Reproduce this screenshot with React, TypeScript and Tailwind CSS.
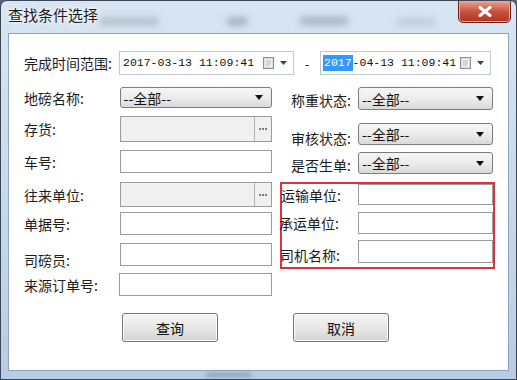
import React from 'react';

const FONT = { fontFamily: '"Noto Sans CJK SC", "Liberation Sans", sans-serif' };

const labelCls = 'text-[14px] leading-[16px] text-[#1b1b1b] whitespace-nowrap';

function ComboBox() {
  return (
    <div className="flex items-center justify-between h-full w-full rounded-[3px] border border-[#7c7c7c] bg-linear-to-b from-[#f6f6f6] via-[#ececec] to-[#d9d9d9] pl-[3px] pr-[8px]">
      <span className="text-[14px] leading-none text-[#111]">--全部--</span>
      <svg width="8" height="5" viewBox="0 0 8 5">
        <path d="M0 0h8L4 5z" fill="#111" />
      </svg>
    </div>
  );
}

function TextBox() {
  return <div className="h-full w-full border border-[#9c9c9c] bg-white" />;
}

function PickBox() {
  return (
    <div className="flex h-full w-full border border-[#9c9c9c] bg-[#f0f0f0]">
      <div className="flex-1" />
      <div className="w-[17px] border-l border-[#b4b4b4] flex items-center justify-center gap-[1px]">
        <div className="w-[2px] h-[2px] bg-[#7d7d7d]" />
        <div className="w-[2px] h-[2px] bg-[#7d7d7d]" />
        <div className="w-[2px] h-[2px] bg-[#7d7d7d]" />
      </div>
    </div>
  );
}

function DateBox({ width, highlight }: { width: string; highlight?: boolean }) {
  return (
    <div className={`flex items-center h-[24px] ${width} border border-[#c3c9d0] bg-white pl-[2px] pr-[6px]`}>
      <span className="text-[11.5px] leading-none text-[#111] flex" style={{ fontFamily: '"Liberation Mono", monospace' }}>
        {highlight ? (
          <>
            <span className="bg-[#3399ff] text-white px-[1px] py-[2px]">2017</span>
            <span className="py-[2px]">-04-13 11:09:41</span>
          </>
        ) : (
          <span className="py-[2px] pl-[1px]">2017-03-13 11:09:41</span>
        )}
      </span>
      <div className="flex-1" />
      <svg width="12" height="12" viewBox="0 0 12 12">
        <rect x="0.5" y="0.5" width="10" height="11" fill="#d9dde2" stroke="#8a9099" />
        <rect x="2" y="2" width="7" height="8" fill="#eef0f2" />
        <path d="M3 4h5M3 6h5M3 8h4" stroke="#b5bac0" strokeWidth="1" />
      </svg>
      <svg width="7" height="4" viewBox="0 0 7 4" className="ml-[5px]">
        <path d="M0 0h7L3.5 4z" fill="#3b4654" />
      </svg>
    </div>
  );
}

function Button({ text }: { text: string }) {
  return (
    <div className="w-[96px] h-[29px] rounded-[3px] border border-[#747474] bg-linear-to-b from-[#f6f6f6] via-[#e8e8e8] to-[#d3d3d3] flex items-center justify-center text-[14px] leading-none text-[#111] shadow-[inset_0_0_0_1px_#fcfcfc]">
      {text}
    </div>
  );
}

export default function App() {
  return (
    <div className="w-[517px] h-[380px] bg-[#5a6470]" style={FONT}>
      <div className="relative w-[517px] h-[380px] rounded-t-[7px] border border-[#3b4756] bg-linear-to-b from-[#d9e5f2] via-[#c8daed] to-[#b7cde5] overflow-hidden">
        {/* blurred glass smudges */}
        <div className="absolute left-[98px] top-[16px] w-[60px] h-[9px] rounded-full bg-[#9aa3ad] opacity-50 blur-[3px]" />
        <div className="absolute left-[225px] top-[16px] w-[22px] h-[9px] rounded-full bg-[#7f8892] opacity-50 blur-[3px]" />
        <div className="absolute left-[298px] top-[15px] w-[50px] h-[10px] rounded-full bg-[#8c959f] opacity-50 blur-[3px]" />
        <div className="absolute left-[395px] top-[17px] w-[40px] h-[8px] rounded-full bg-[#a3abb4] opacity-40 blur-[3px]" />
        <div className="absolute left-[205px] bottom-[2px] w-[45px] h-[4px] rounded-full bg-[#6d7c8c] opacity-60 blur-[2px]" />

        {/* title bar */}
        <div className="relative h-[32px] flex items-start">
          <div className="pl-[7px] pt-[5px] text-[15px] leading-[17px] text-[#1a1a1a] [text-shadow:0_0_6px_#fff,0_0_3px_#fff]">
            查找条件选择
          </div>
          <div className="flex-1" />
          <div className="mr-[5px] -mt-[1px] w-[53px] h-[23px] rounded-b-[5px] border border-[#6b2118] bg-linear-to-b from-[#e6a294] via-[#c9533f] to-[#b3301f] flex items-center justify-center shadow-[inset_0_0_0_1px_#eda99a]">
            <svg width="14" height="11" viewBox="0 0 14 11">
              <path d="M2 1.5l10 8M12 1.5l-10 8" stroke="#fff" strokeWidth="3" strokeLinecap="round" />
            </svg>
          </div>
        </div>

        {/* client area */}
        <div className="ml-[7px] w-[501px] h-[338px] border border-[#8ea4bb] bg-white">
          {/* date row */}
          <div className="flex items-center mt-[17px] pl-[15px]">
            <div className={`${labelCls} w-[95px]`}>完成时间范围:</div>
            <DateBox width="w-[175px]" />
            <div className="w-[26px] text-center text-[13px] leading-none text-[#222]">-</div>
            <DateBox width="w-[171px]" highlight />
          </div>

          <div className="flex mt-[12px] pl-[15px]">
            {/* left column */}
            <div className="w-[248px] flex flex-col">
              <div className="flex items-center h-[21px]">
                <div className={`${labelCls} w-[96px]`}>地磅名称:</div>
                <div className="w-[153px] h-full"><ComboBox /></div>
              </div>
              <div className="flex items-center h-[26px] mt-[8px]">
                <div className={`${labelCls} w-[96px]`}>存货:</div>
                <div className="w-[152px] h-full"><PickBox /></div>
              </div>
              <div className="flex items-center h-[23px] mt-[8px]">
                <div className={`${labelCls} w-[96px] pt-[1px]`}>车号:</div>
                <div className="w-[152px] h-full"><TextBox /></div>
              </div>
              <div className="flex items-center h-[25px] mt-[9px]">
                <div className={`${labelCls} w-[96px]`}>往来单位:</div>
                <div className="w-[152px] h-full"><PickBox /></div>
              </div>
              <div className="flex items-center h-[23px] mt-[5px]">
                <div className={`${labelCls} w-[96px]`}>单据号:</div>
                <div className="w-[152px] h-full"><TextBox /></div>
              </div>
              <div className="flex items-center h-[23px] mt-[8px]">
                <div className={`${labelCls} w-[96px] pt-[11px]`}>司磅员:</div>
                <div className="w-[152px] h-full"><TextBox /></div>
              </div>
              <div className="flex items-center h-[23px] mt-[7px]">
                <div className={`${labelCls} w-[95px]`}>来源订单号:</div>
                <div className="w-[153px] h-full"><TextBox /></div>
              </div>
            </div>

            {/* right column */}
            <div className="ml-[8px] w-[215px] flex flex-col">
              <div className="flex items-center h-[23px] pl-[11px]">
                <div className={`${labelCls} w-[67px] pt-[3px]`}>称重状态:</div>
                <div className="w-[135px] h-full"><ComboBox /></div>
              </div>
              <div className="flex items-center h-[22px] mt-[13px] pl-[11px]">
                <div className={`${labelCls} w-[67px] pt-[7px]`}>审核状态:</div>
                <div className="w-[135px] h-full"><ComboBox /></div>
              </div>
              <div className="flex items-center h-[22px] mt-[7px] pl-[11px]">
                <div className={`${labelCls} w-[67px] pt-[3px]`}>是否生单:</div>
                <div className="w-[135px] h-full"><ComboBox /></div>
              </div>

              {/* highlighted group */}
              <div className="mt-[8px] h-[87px] border-2 border-[#d9343f] flex flex-col">
                <div className="flex items-center h-[21px]">
                  <div className={`${labelCls} w-[76px] -ml-[1px]`}>运输单位:</div>
                  <div className="w-[136px] h-full pl-[1px]"><TextBox /></div>
                </div>
                <div className="flex items-center h-[22px] mt-[7px]">
                  <div className={`${labelCls} w-[76px] -ml-[3px]`}>承运单位:</div>
                  <div className="w-[138px] h-full pl-[3px]"><TextBox /></div>
                </div>
                <div className="flex items-center h-[23px] mt-[6px]">
                  <div className={`${labelCls} w-[76px] -ml-[2px] pt-[6px]`}>司机名称:</div>
                  <div className="w-[137px] h-full pl-[2px]"><TextBox /></div>
                </div>
              </div>
            </div>
          </div>

          {/* buttons */}
          <div className="flex mt-[17px] pl-[113px] gap-[75px]">
            <Button text="查询" />
            <Button text="取消" />
          </div>
        </div>
      </div>
    </div>
  );
}
